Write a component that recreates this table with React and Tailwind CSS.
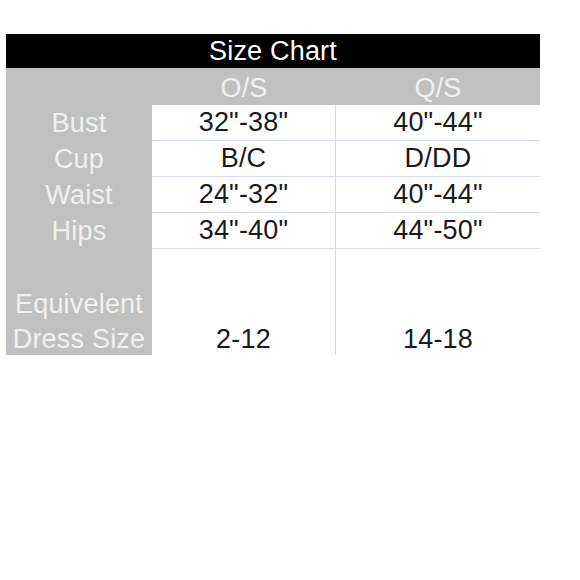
import React from 'react';

const rows = [
  { label: 'Bust', os: '32"-38"', qs: '40"-44"' },
  { label: 'Cup', os: 'B/C', qs: 'D/DD' },
  { label: 'Waist', os: '24"-32"', qs: '40"-44"' },
  { label: 'Hips', os: '34"-40"', qs: '44"-50"' },
];

const SizeChart = () => {
  return (
    <div className="w-[580px] h-[580px] bg-white pt-[34px] pl-[6px] font-['Liberation_Sans',Arial,sans-serif] text-[27px] tracking-[0.2px]">
      <div className="grid w-[534px] grid-cols-[146px_184px_204px]">
        <div className="col-span-3 h-[34px] bg-black text-white flex items-center justify-center leading-none pt-[1px]">
          Size Chart
        </div>

        <div className="h-[37px] bg-[#c0c0c0]" />
        <div className="h-[37px] bg-[#c0c0c0] text-[#f0f0f0] flex items-center justify-center leading-none pt-[3px]">O/S</div>
        <div className="h-[37px] bg-[#c0c0c0] text-[#f0f0f0] flex items-center justify-center leading-none pt-[3px]">Q/S</div>

        {rows.map((row) => (
          <React.Fragment key={row.label}>
            <div className="h-[36px] bg-[#c0c0c0] text-[#f0f0f0] flex items-center justify-center leading-none">
              {row.label}
            </div>
            <div className="h-[36px] border-b border-r border-[#d6dce6] text-[#1a1a1a] flex items-center justify-center leading-none">
              {row.os}
            </div>
            <div className="h-[36px] border-b border-[#d6dce6] text-[#1a1a1a] flex items-center justify-center leading-none">
              {row.qs}
            </div>
          </React.Fragment>
        ))}

        <div className="h-[106px] bg-[#c0c0c0] text-[#f0f0f0] flex items-end justify-center">
          <div className="text-center leading-[35px] -mb-[2px]">
            Equivelent<br />Dress Size
          </div>
        </div>
        <div className="h-[106px] border-r border-[#d6dce6] text-[#1a1a1a] flex items-end justify-center">
          <div className="leading-[35px] -mb-[2px]">2-12</div>
        </div>
        <div className="h-[106px] text-[#1a1a1a] flex items-end justify-center">
          <div className="leading-[35px] -mb-[2px]">14-18</div>
        </div>
      </div>
    </div>
  );
};

export default function App() {
  return <SizeChart />;
}
